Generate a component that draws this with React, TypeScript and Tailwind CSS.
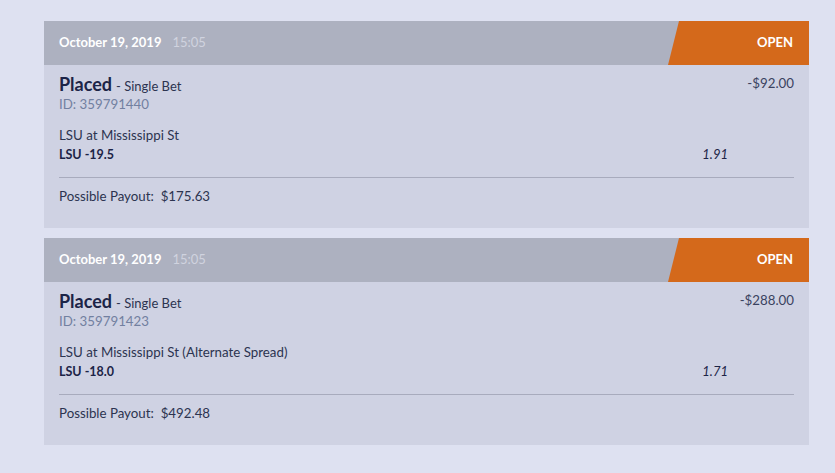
import React from "react";

type Bet = { id: string; game: string; pick: string; odds: string; stake: string; payout: string };

const bets: Bet[] = [
  { id: "359791440", game: "LSU at Mississippi St", pick: "LSU -19.5", odds: "1.91", stake: "-$92.00", payout: "$175.63" },
  { id: "359791423", game: "LSU at Mississippi St (Alternate Spread)", pick: "LSU -18.0", odds: "1.71", stake: "-$288.00", payout: "$492.48" },
];

function Card({ b }: { b: Bet }) {
  return (
    <div className="w-[765px] bg-[#cfd2e3]">
      <div className="relative h-[44px] bg-[#adb1c0] flex items-center pl-[15px]">
        <span className="text-[13px] font-bold text-white">October 19, 2019</span>
        <span className="text-[13px] text-[#d0d3df] ml-[11px]">15:05</span>
        <div
          className="absolute top-0 right-0 h-full w-[141px] bg-[#d4691b] flex items-center justify-end pr-[16px]"
          style={{ clipPath: "polygon(11px 0, 100% 0, 100% 100%, 0 100%)" }}
        >
          <span className="text-[13px] font-bold text-white">OPEN</span>
        </div>
      </div>
      <div className="px-[15px] pt-[8px] pb-[23px]">
        <div className="flex justify-between">
          <div>
            <div className="flex items-baseline h-[22px] leading-[22px]">
              <span className="text-[18px] font-bold text-[#1c2447]">Placed</span>
              <span className="text-[13px] text-[#2c3450] ml-[4px]">- Single Bet</span>
            </div>
            <div className="text-[13.3px] text-[#7280a0] leading-[18px]">ID: {b.id}</div>
          </div>
          <div className="text-[13.3px] text-[#3a4260] pt-[1px] leading-[18px]">{b.stake}</div>
        </div>
        <div className="mt-[12px] text-[13.3px] text-[#2c3450] leading-[20px]">{b.game}</div>
        <div className="flex items-center h-[20px] mb-[12px]">
          <span className="text-[12.5px] font-bold text-[#1c2447]">{b.pick}</span>
          <span className="ml-auto mr-[66px] text-[13px] italic text-[#1c2447]">{b.odds}</span>
        </div>
        <div className="h-px bg-[#a8abbd]" />
        <div className="mt-[9px] text-[13.3px] text-[#2c3450] leading-[18px]">
          Possible Payout:&nbsp; {b.payout}
        </div>
      </div>
    </div>
  );
}

export default function App() {
  return (
    <div className="min-h-[473px] bg-[#dee1f1] pt-[21px] pl-[44px] flex flex-col gap-[10px]" style={{ fontFamily: "Lato, 'Noto Sans', sans-serif" }}>
      {bets.map((b) => (
        <Card key={b.id} b={b} />
      ))}
    </div>
  );
}
